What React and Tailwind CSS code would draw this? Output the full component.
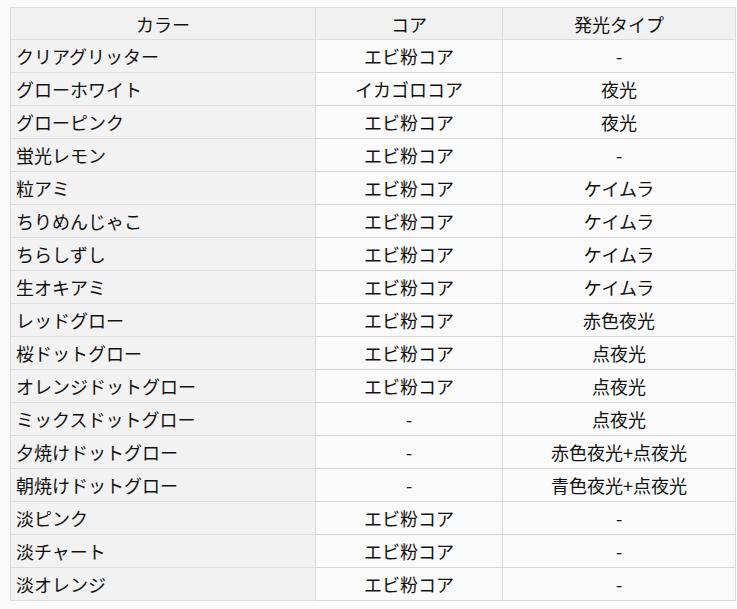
import React from "react";

const rows = [
	["クリアグリッター", "エビ粉コア", "-"],
	["グローホワイト", "イカゴロコア", "夜光"],
	["グローピンク", "エビ粉コア", "夜光"],
	["蛍光レモン", "エビ粉コア", "-"],
	["粒アミ", "エビ粉コア", "ケイムラ"],
	["ちりめんじゃこ", "エビ粉コア", "ケイムラ"],
	["ちらしずし", "エビ粉コア", "ケイムラ"],
	["生オキアミ", "エビ粉コア", "ケイムラ"],
	["レッドグロー", "エビ粉コア", "赤色夜光"],
	["桜ドットグロー", "エビ粉コア", "点夜光"],
	["オレンジドットグロー", "エビ粉コア", "点夜光"],
	["ミックスドットグロー", "-", "点夜光"],
	["夕焼けドットグロー", "-", "赤色夜光+点夜光"],
	["朝焼けドットグロー", "-", "青色夜光+点夜光"],
	["淡ピンク", "エビ粉コア", "-"],
	["淡チャート", "エビ粉コア", "-"],
	["淡オレンジ", "エビ粉コア", "-"],
];

const App = () => {
	return (
		<div
			className="min-h-[609px] bg-[#fafafa] pt-[7px] pl-[10px] text-[#111]"
			style={{ fontFamily: '"Noto Sans CJK JP", "Noto Sans", sans-serif' }}
		>
			<table className="w-[726px] border-collapse text-[18px] leading-[24px]">
				<thead>
					<tr className="bg-[#f1f1f1]">
						<th className="w-[305px] h-[32px] border border-[#dcdcdc] font-normal p-0">
							カラー
						</th>
						<th className="w-[187px] border border-[#dcdcdc] font-normal p-0">
							コア
						</th>
						<th className="border border-[#dcdcdc] font-normal p-0">
							発光タイプ
						</th>
					</tr>
				</thead>
				<tbody>
					{rows.map((r, i) => (
						<tr key={i} className="h-[33px]">
							<td className="border border-[#dcdcdc] bg-[#f2f2f2] px-[5px] py-0 text-left">
								{r[0]}
							</td>
							<td className="border-x border-y border-x-[#dcdcdc] border-y-[#d6d6d6] border-y-dotted bg-[#fafafa] py-0 text-center">
								{r[1]}
							</td>
							<td className="border-x border-y border-x-[#dcdcdc] border-y-[#d6d6d6] border-y-dotted bg-[#fafafa] py-0 text-center">
								{r[2]}
							</td>
						</tr>
					))}
				</tbody>
			</table>
		</div>
	);
};

export default App;
